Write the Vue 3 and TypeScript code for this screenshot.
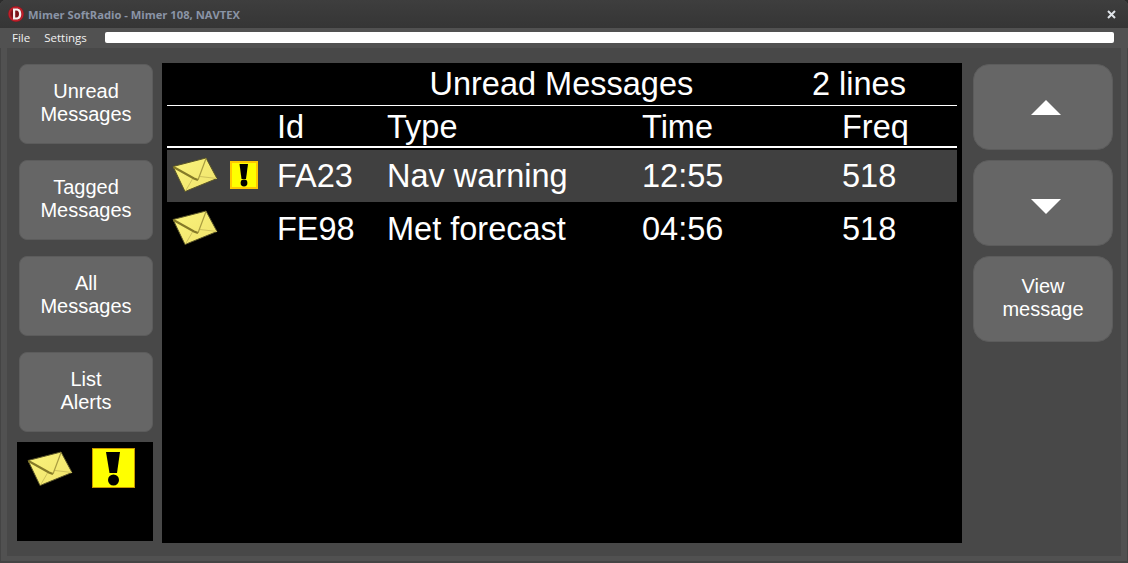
<template>
  <div class="window">
    <header class="titlebar">
      <svg class="logo" width="16" height="16" viewBox="0 0 16 16">
        <defs>
          <radialGradient id="logoFill" cx="0.500" cy="0.500" r="0.500">
            <stop offset="0.550" stop-color="#7c1219" />
            <stop offset="0.850" stop-color="#c8202c" />
            <stop offset="1" stop-color="#7a1a20" />
          </radialGradient>
        </defs>
        <circle cx="8" cy="8" r="8" fill="url(#logoFill)" />
        <path d="M5 2.500h3.600c3 0 4.700 2.200 4.700 5.500s-1.700 5.500-4.700 5.500H5z M7.200 4.500v7h1.300c1.600 0 2.500-1.300 2.500-3.500s-.9-3.500-2.500-3.500z" fill="#f6f0f0" fill-rule="evenodd" />
      </svg>
      <span class="title">Mimer SoftRadio - Mimer 108, NAVTEX</span>
      <svg class="close" width="9" height="9" viewBox="0 0 9 9">
        <path d="M1 1l7 7M8 1l-7 7" stroke="#dfe3e8" stroke-width="2" fill="none" />
      </svg>
    </header>
    <nav class="menubar">
      <span class="menu-item">File</span>
      <span class="menu-item">Settings</span>
      <div class="progress" />
    </nav>
    <main class="content">
      <aside class="left">
        <button v-for="b in leftButtons" :key="b[0]" class="btn btn--left">{{ b[0] }}<br />{{ b[1] }}</button>
        <div class="status">
          <svg class="env env--status" viewBox="0 0 46 36"><use href="#envelope" /></svg>
          <svg class="alert--big" viewBox="0 0 43 40">
            <rect x="0.500" y="0.500" width="42" height="39" fill="#ffff00" stroke="#c89800" />
            <path d="M14 4h14l-3 21h-7.500z" fill="#000" />
            <circle cx="21.500" cy="32" r="5.500" fill="#000" />
          </svg>
        </div>
      </aside>

      <section class="panel">
        <div class="panel-title">
          <span class="panel-name">Unread Messages</span>
          <span class="panel-count">2 lines</span>
        </div>
        <div class="row row--head">
          <span class="icons" />
          <span class="c-id">Id</span>
          <span class="c-type">Type</span>
          <span class="c-time">Time</span>
          <span class="c-freq">Freq</span>
        </div>
        <div v-for="m in messages" :key="m.id" class="row" :class="m.alert ? 'row--selected' : 'row--plain'">
          <span class="icons">
            <svg class="env" viewBox="0 0 46 36"><use href="#envelope" /></svg>
            <svg v-if="m.alert" class="alert" viewBox="0 0 28 28">
              <rect x="1" y="1" width="26" height="26" fill="#ffff00" stroke="#ffc800" stroke-width="2" />
              <path d="M9.500 3h8.500l-2 15h-4.500z" fill="#000" />
              <circle cx="14" cy="22" r="3.400" fill="#000" />
            </svg>
          </span>
          <span class="c-id">{{ m.id }}</span>
          <span class="c-type">{{ m.type }}</span>
          <span class="c-time">{{ m.time }}</span>
          <span class="c-freq">{{ m.freq }}</span>
        </div>
      </section>

      <aside class="right">
        <button class="btn btn--right">
          <svg class="arrow arrow--up" width="30" height="15" viewBox="0 0 30 15"><path d="M15 0l15 15H0z" fill="#fff" /></svg>
        </button>
        <button class="btn btn--right">
          <svg class="arrow arrow--down" width="30" height="15" viewBox="0 0 30 15"><path d="M0 0h30L15 15z" fill="#fff" /></svg>
        </button>
        <button class="btn btn--right btn--text">View<br />message</button>
      </aside>
    </main>

    <svg class="defs" width="0" height="0">
      <defs>
        <linearGradient id="envFill" x1="0" y1="0" x2="1" y2="1">
          <stop offset="0" stop-color="#fbf47c" />
          <stop offset="1" stop-color="#efe26c" />
        </linearGradient>
        <g id="envelope">
          <path d="M1 9.500L34 1l11 20.500L13 34.500z" fill="url(#envFill)" stroke="#5a5528" stroke-width="1" />
          <path d="M1.500 10l20.500 11.500 4 1.500" fill="none" stroke="#857a28" stroke-width="2.200" />
          <path d="M26 23L34 1.500" fill="none" stroke="#a89c40" stroke-width="1.200" />
          <path d="M13.500 34l7-12M45 21.500l-17-2" fill="none" stroke="#cfc25c" stroke-width="1" />
        </g>
      </defs>
    </svg>
  </div>
</template>

<script setup lang="ts">
const leftButtons: [string, string][] = [
  ['Unread', 'Messages'],
  ['Tagged', 'Messages'],
  ['All', 'Messages'],
  ['List', 'Alerts'],
]

const messages = [
  { id: 'FA23', type: 'Nav warning', time: '12:55', freq: '518', alert: true },
  { id: 'FE98', type: 'Met forecast', time: '04:56', freq: '518', alert: false },
]
</script>

<style>
html, body { margin: 0; background: #2c2c2c; }
</style>

<style scoped>
.window {
  width: 1128px;
  height: 563px;
  display: flex;
  flex-direction: column;
  background: #515151;
  box-shadow: inset 0 -2px #444, inset 1px 0 #444, inset -1px 0 #444;
  border-radius: 6px 6px 0 0;
  font-family: "Liberation Sans", Arial, sans-serif;
  color: #fff;
  overflow: hidden;
  box-sizing: border-box;
}
.titlebar {
  height: 28px;
  flex: none;
  display: flex;
  align-items: center;
  padding: 0 12px 0 8px;
  background: linear-gradient(#3e3e3e, #353535);
}
.title {
  margin-left: 4px;
  font-family: "Open Sans", sans-serif;
  font-size: 11.200px;
  font-weight: 700;
  color: #8a94a6;
}
.close { margin-left: auto; }
.menubar {
  height: 20px;
  flex: none;
  display: flex;
  align-items: center;
  padding: 0 14px 1px 12px;
  box-sizing: border-box;
  background: #515151;
}
.menu-item {
  font-family: "Open Sans", sans-serif;
  font-size: 11.500px;
  color: #f2f2f2;
  margin-right: 14px;
}
.progress {
  flex: 1;
  height: 11px;
  margin-left: 4px;
  background: #fff;
  border-radius: 2px;
}
.content {
  flex: none;
  height: 508px;
  margin: 0 7px;
  display: flex;
  align-items: flex-start;
  background: #484848;
  box-sizing: border-box;
  padding: 15px 0 0 10px;
}
.left {
  width: 136px;
  display: flex;
  flex-direction: column;
  align-items: flex-end;
  padding-top: 1px;
  gap: 16px;
}
.btn {
  border: 1px solid #5c5c5c;
  background: #666;
  color: #fff;
  font-family: "Liberation Sans", Arial, sans-serif;
  font-size: 20px;
  line-height: 23px;
  padding: 0;
  display: flex;
  align-items: center;
  justify-content: center;
  text-align: center;
  flex-direction: column;
  box-sizing: border-box;
}
.btn--left {
  width: 134px;
  height: 80px;
  border-radius: 8px;
  display: block;
  padding-bottom: 2px;
}
.status {
  width: 136px;
  height: 99px;
  margin-top: -6px;
  background: #000;
  position: relative;
}
.env--status {
  position: absolute;
  left: 10px;
  top: 9px;
}
.alert--big {
  position: absolute;
  left: 75px;
  top: 6px;
  width: 43px;
  height: 40px;
}
.panel {
  width: 800px;
  height: 480px;
  margin-left: 9px;
  padding: 0 5px;
  box-sizing: border-box;
  background: #000;
}
.panel-title {
  height: 43px;
  box-sizing: border-box;
  border-bottom: 1px solid #fff;
  display: flex;
  font-size: 32.500px;
  line-height: 43px;
}
.panel-name { margin-left: 262.500px; width: 382.500px; }
.row {
  display: flex;
  height: 53px;
  align-items: center;
  font-size: 32.500px;
  box-sizing: border-box;
}
.row--head {
  height: 42px;
  border-bottom: 2px solid #fff;
  margin-bottom: 2px;
  padding-top: 2px;
}
.row--selected { background: #404040; height: 52px; }
.row--plain { padding-top: 2px; }
.icons {
  width: 110px;
  display: flex;
  align-items: center;
  flex: none;
}
.env {
  width: 46px;
  height: 36px;
  margin-left: 5px;
  margin-bottom: 2px;
  flex: none;
}
.row--plain .env { margin-bottom: 4px; }
.env--status { margin: 0; }
.alert {
  width: 28px;
  height: 28px;
  margin-left: 12px;
  margin-bottom: 2px;
  flex: none;
}
.c-id { width: 110px; }
.c-type { width: 255px; }
.c-time { width: 200px; }
.right {
  width: 140px;
  margin-left: 11px;
  padding-top: 1px;
  display: flex;
  flex-direction: column;
  gap: 10px;
}
.btn--right {
  width: 140px;
  height: 86px;
  border-radius: 16px;
}
.btn--text { padding-bottom: 2px; }
.arrow { position: relative; left: 3px; }
.arrow--up { top: 0.500px; }
.arrow--down { top: 3.500px; }
.defs { position: absolute; }
</style>
